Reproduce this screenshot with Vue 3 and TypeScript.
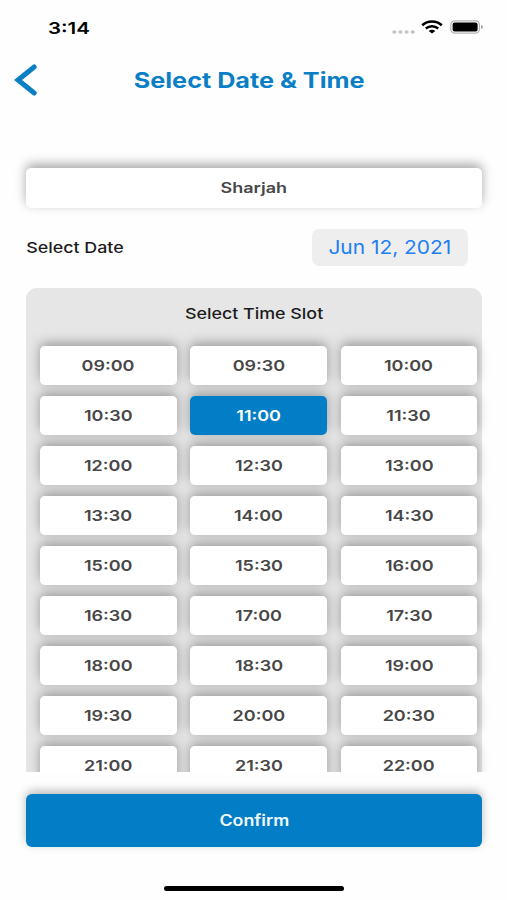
<script setup lang="ts">
import { ref } from 'vue'

const city = ref('Sharjah')
const date = ref('Jun 12, 2021')
const selected = ref('11:00')

const slots: string[] = Array.from({ length: 27 }, (_, i) => {
  const minutes = 9 * 60 + i * 30
  const h = String(Math.floor(minutes / 60)).padStart(2, '0')
  const m = String(minutes % 60).padStart(2, '0')
  return `${h}:${m}`
})
</script>

<template>
  <main class="screen">
    <div class="status">
      <span class="clock"><span class="wide">3:14</span></span>
      <div class="indicators">
        <svg class="dots" width="24" height="6" viewBox="0 0 24 6">
          <g fill="#c4c4c4">
            <ellipse cx="2.4" cy="3" rx="2.1" ry="1.7" />
            <ellipse cx="8.5" cy="3" rx="2.1" ry="1.7" />
            <ellipse cx="14.6" cy="3" rx="2.1" ry="1.7" />
            <ellipse cx="20.7" cy="3" rx="2.1" ry="1.7" />
          </g>
        </svg>
        <svg class="wifi" width="22" height="14" viewBox="0 0 22 14">
          <g fill="none" stroke="#000" stroke-width="2.5">
            <path d="M1.2 5.2C6.8 .2 15.2 .2 20.8 5.2" />
            <path d="M4.8 8.5C8.4 5.4 13.6 5.4 17.2 8.5" />
          </g>
          <path d="M7.7 10.9C9.6 9.3 12.4 9.3 14.3 10.9L11 13.6Z" fill="#000" />
        </svg>
        <svg class="battery" width="34" height="14" viewBox="0 0 34 14">
          <rect x=".8" y=".8" width="28.6" height="12.4" rx="4" fill="#fff" stroke="#b5b5b5" stroke-width="1.2" />
          <rect x="2.6" y="2.5" width="25" height="9" rx="2" fill="#000" />
          <path d="M31.2 4.9C33.2 5.6 33.2 8.4 31.2 9.1Z" fill="#8d8d8d" />
        </svg>
      </div>
    </div>

    <header class="header">
      <button class="back" aria-label="Back">
        <svg width="24" height="32" viewBox="0 0 24 32">
          <path d="M20.2 3L4 16L20.2 29" fill="none" stroke="#0a7fc6" stroke-width="5" stroke-linecap="round" stroke-linejoin="miter" />
        </svg>
      </button>
      <h1 class="title"><span class="wide">Select Date &amp; Time</span></h1>
    </header>

    <button class="city"><span class="wide">{{ city }}</span></button>

    <div class="date-row">
      <span class="date-label"><span class="wide">Select Date</span></span>
      <button class="date"><span class="wide">{{ date }}</span></button>
    </div>

    <section class="panel">
      <h2 class="panel-title"><span class="wide">Select Time Slot</span></h2>
      <div class="slots">
        <button
          v-for="slot in slots"
          :key="slot"
          class="slot"
          :class="{ active: slot === selected }"
          @click="selected = slot"
        >
          <span class="wide">{{ slot }}</span>
        </button>
      </div>
    </section>

    <button class="confirm"><span class="wide">Confirm</span></button>
    <div class="home"></div>
  </main>
</template>

<style>
body {
  background: #fff;
}
</style>

<style scoped>
.screen {
  width: 507px;
  height: 900px;
  box-sizing: border-box;
  display: flex;
  flex-direction: column;
  overflow: hidden;
  background: #fefefe;
  font-family: Inter, 'Liberation Sans', sans-serif;
  color: #1c1c1c;
}
button {
  font: inherit;
  border: 0;
  padding: 0;
  background: none;
  color: inherit;
}
/* Letterforms are wider than the face's natural proportions. */
.wide {
  display: inline-block;
  white-space: nowrap;
  transform: scaleX(1.2);
}
.status {
  height: 54px;
  flex: none;
  display: flex;
  align-items: center;
  justify-content: space-between;
  padding: 0 23.5px 0 48.5px;
}
.clock {
  width: 40px;
  display: flex;
  justify-content: center;
  padding-top: 1px;
  font-size: 16.5px;
  font-weight: 600;
  color: #000;
}
.clock .wide {
  transform: scaleX(1.24);
}
.indicators {
  display: flex;
  align-items: center;
}
.dots {
  margin-top: 9px;
}
.wifi {
  margin: 0 6.5px 0 5px;
}
.header {
  height: 52px;
  flex: none;
  display: grid;
  grid-template-columns: 60px 1fr 60px;
  align-items: center;
  padding: 0 22px 0 14px;
}
.back {
  height: 32px;
  text-align: left;
}
.back svg {
  display: block;
}
.title {
  margin: 0;
  padding-top: 2px;
  text-align: center;
  font-size: 21px;
  font-weight: 650;
  line-height: 26px;
  color: #0a7fc6;
}
.city {
  flex: none;
  height: 39.5px;
  margin: 62px 25.3px 0 26.4px;
  border-radius: 5px;
  background: #fff;
  box-shadow: 0 -4px 11px rgba(0, 0, 0, 0.34);
  font-size: 14.5px;
  font-weight: 600;
  color: #474747;
}
.city .wide {
  transform: scaleX(1.24);
}
.date-row {
  flex: none;
  height: 37px;
  margin: 21.5px 39px 0 26.5px;
  display: flex;
  align-items: center;
  justify-content: space-between;
}
.date-label {
  width: 97px;
  display: flex;
  justify-content: center;
  font-size: 15px;
  font-weight: 450;
}
.date-label .wide,
.panel-title .wide {
  transform: scaleX(1.19);
}
.date {
  width: 156px;
  height: 37px;
  border-radius: 7px;
  background: #eeeeef;
  font-size: 19px;
  color: #2080f2;
}
.date .wide {
  transform: scaleX(1.1);
}
.panel {
  flex: none;
  height: 484.5px;
  margin-top: 21.5px;
  padding: 0 29.8px 0 40.2px;
  overflow: hidden;
  position: relative;
  isolation: isolate;
}
.panel::before {
  content: '';
  position: absolute;
  z-index: -2;
  inset: 0 25.3px 0 26.4px;
  border-radius: 11px 11px 0 0;
  background: #e6e6e6;
}
.panel-title {
  margin: 0;
  height: 58px;
  padding-right: 10px;
  line-height: 52px;
  text-align: center;
  font-size: 15px;
  font-weight: 450;
}
.slots {
  display: grid;
  grid-template-columns: repeat(3, 1fr);
  grid-auto-rows: 39.4px;
  gap: 10.65px 13.5px;
}
.slot {
  position: relative;
  border-radius: 5px;
  font-size: 15px;
  font-weight: 600;
  color: #474747;
  background: #fff;
}
.slot::before {
  content: '';
  position: absolute;
  z-index: -1;
  inset: 0;
  border-radius: 5px;
  box-shadow: 0 -3px 12px rgba(0, 0, 0, 0.34);
}
.slot .wide {
  transform: scaleX(1.2);
}
.slot.active {
  background: #027ec6;
  color: #fff;
}
.confirm {
  flex: none;
  height: 53.3px;
  margin: 21.5px 25.3px 0 26.4px;
  border-radius: 6px;
  background: #027ec6;
  box-shadow: 0 -3px 10px rgba(0, 0, 0, 0.28);
  font-size: 15.5px;
  font-weight: 600;
  color: #f2faff;
}
.confirm .wide {
  transform: scaleX(1.15);
}
.home {
  flex: none;
  width: 180px;
  height: 5.6px;
  margin: 39px 0 0 164px;
  border-radius: 3px;
  background: #000;
}
</style>
